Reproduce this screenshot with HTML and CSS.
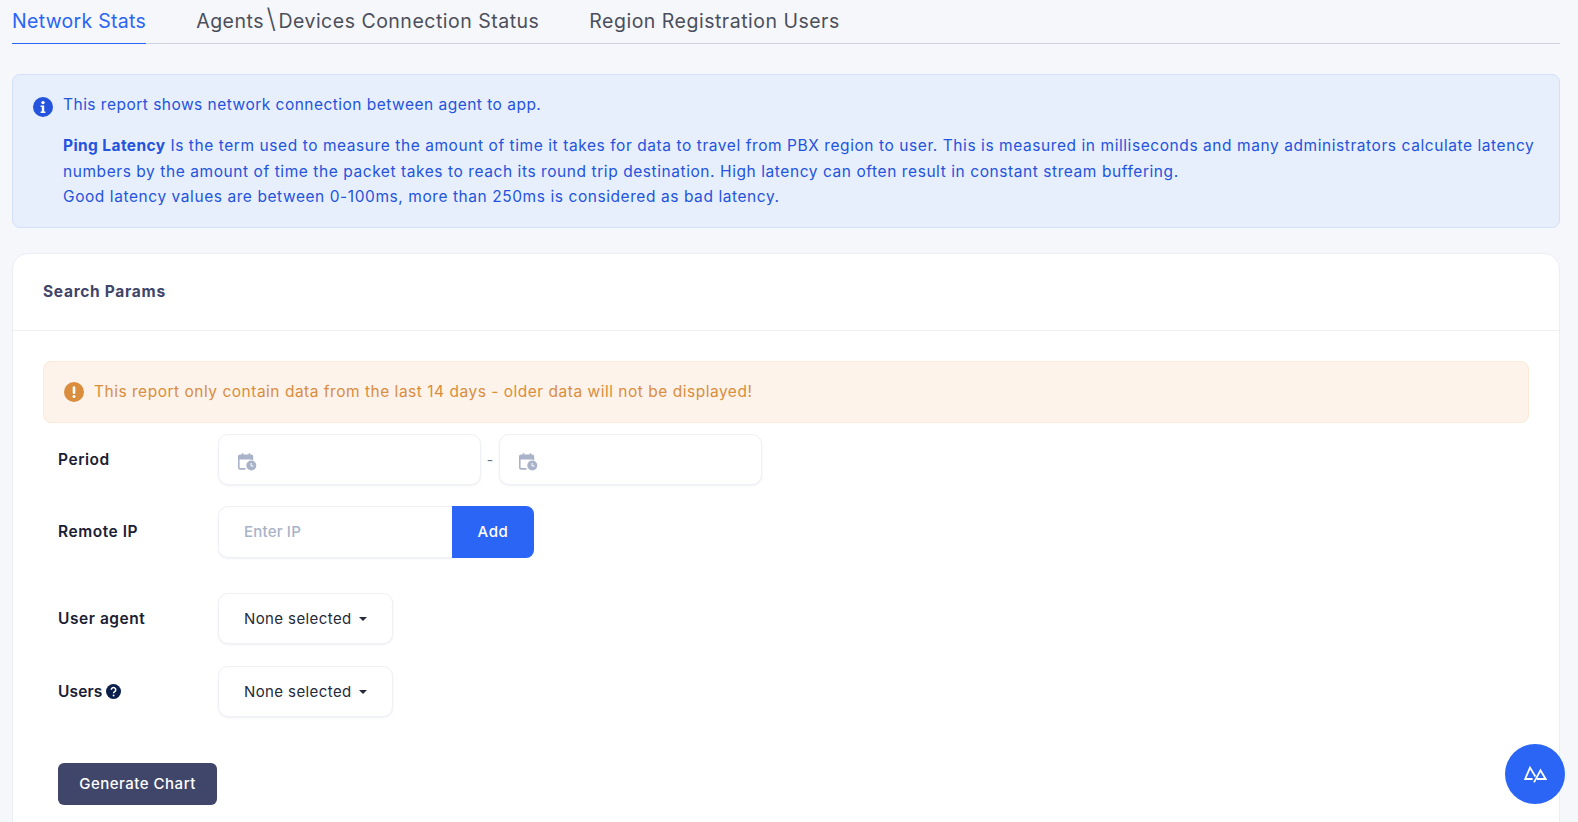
FILE: index.html
```html
<!DOCTYPE html>
<html lang="en">
<head>
<meta charset="utf-8">
<title>Network Stats</title>
<link rel="stylesheet" href="styles.css">
</head>
<body>
<main class="page">
  <nav class="tabs">
    <a class="tab active">Network Stats</a>
    <a class="tab">Agents<span class="slash">\</span>Devices Connection Status</a>
    <a class="tab">Region Registration Users</a>
  </nav>

  <section class="info">
    <svg class="info-icon" viewBox="0 0 20 20"><circle cx="10" cy="10" r="10" fill="#2453dd"/><circle cx="10" cy="5.6" r="1.7" fill="#fff"/><path d="M7.6 8.4h3.6v6h1.2v1.6H7.6v-1.6h1.2V10H7.6z" fill="#fff"/></svg>
    <div class="info-body">
      <p class="info-lead">This report shows network connection between agent to app.</p>
      <p class="info-text"><strong>Ping Latency</strong> Is the term used to measure the amount of time it takes for data to travel from PBX region to user. This is measured in milliseconds and many administrators calculate latency numbers by the amount of time the packet takes to reach its round trip destination. High latency can often result in constant stream buffering.<br>Good latency values are between 0-100ms, more than 250ms is considered as bad latency.</p>
    </div>
  </section>

  <section class="card">
    <header class="card-head">Search Params</header>
    <div class="card-body">
      <div class="warn">
        <svg class="warn-icon" viewBox="0 0 20 20"><circle cx="10" cy="10" r="10" fill="#d98d3d"/><rect x="8.7" y="4.2" width="2.6" height="7.8" rx="1.2" fill="#fff"/><circle cx="10" cy="14.6" r="1.5" fill="#fff"/></svg>
        <span class="warn-text">This report only contain data from the last 14 days - older data will not be displayed!</span>
      </div>

      <div class="row row-period">
        <label class="label">Period</label>
        <div class="field date">
          <svg class="cal" viewBox="0 0 20 18"><path d="M3 1.5h1.8v-1.3h1.6v1.3h5.2v-1.3h1.6v1.3h1a2 2 0 0 1 2 2V7h-1.6V6.4H2.6v8c0 .3.2.5.5.5H8.5v1.8H3a2.2 2.2 0 0 1-2-2V3.5a2 2 0 0 1 2-2z" fill="#a8b2c8"/><circle cx="14.3" cy="12.5" r="5" fill="#a8b2c8"/><path d="M14.1 10v3h2.4" stroke="#fff" fill="none"/></svg>
        </div>
        <span class="dash">-</span>
        <div class="field date">
          <svg class="cal" viewBox="0 0 20 18"><path d="M3 1.5h1.8v-1.3h1.6v1.3h5.2v-1.3h1.6v1.3h1a2 2 0 0 1 2 2V7h-1.6V6.4H2.6v8c0 .3.2.5.5.5H8.5v1.8H3a2.2 2.2 0 0 1-2-2V3.5a2 2 0 0 1 2-2z" fill="#a8b2c8"/><circle cx="14.3" cy="12.5" r="5" fill="#a8b2c8"/><path d="M14.1 10v3h2.4" stroke="#fff" fill="none"/></svg>
        </div>
      </div>

      <div class="row row-ip">
        <label class="label">Remote IP</label>
        <div class="group">
          <div class="field ip">Enter IP</div>
          <button class="add">Add</button>
        </div>
      </div>

      <div class="row row-agent">
        <label class="label">User agent</label>
        <div class="field select">None selected<i class="caret"></i></div>
      </div>

      <div class="row row-users">
        <label class="label"><span class="label-tight">Users</span>
          <svg class="help" viewBox="0 0 14 14"><circle cx="7" cy="7" r="7" fill="#0b1f4d"/><path d="M4.9 5.4a2.1 2.1 0 1 1 3.2 1.8c-.7.4-1 .7-1 1.4" stroke="#fff" stroke-width="1.4" fill="none"/><circle cx="7.1" cy="10.7" r=".9" fill="#fff"/></svg>
        </label>
        <div class="field select">None selected<i class="caret"></i></div>
      </div>

      <button class="generate">Generate Chart</button>
    </div>
  </section>
</main>
<button class="fab" aria-label="Help">
  <svg viewBox="0 0 24 18" width="24" height="18"><path d="M9.6 14H2.2L7 2.6 12.4 11.5M14 14H22.6L17.5 5.4 11 17.4" stroke="#fff" stroke-width="1.8" fill="none"/></svg>
</button>
</body>
</html>
```
FILE: styles.css
```css
* { box-sizing: border-box; }
html, body { margin: 0; height: 822px; overflow: hidden; }
body {
  background: #f5f7fb;
  font-family: Inter, "Noto Sans", sans-serif;
  color: #1a2033;
  position: relative;
}
.page { padding: 0 18px 0 12px; height: 822px; overflow: hidden; }

.tabs {
  display: flex;
  gap: 50px;
  height: 44px;
  border-bottom: 1px solid #cdd2df;
}
.tab {
  font-size: 19.5px;
  letter-spacing: .5px;
  line-height: 43px;
  height: 44px;
  color: #4b4f5c;
  white-space: nowrap;
}
.tab.active { color: #2a65f5; border-bottom: 1px solid #2a65f5; letter-spacing: .3px; }
.slash { font-size: 27px; font-weight: 300; line-height: 20px; margin: 0 2.5px; letter-spacing: 0; }

.info {
  margin-top: 30px;
  height: 154px;
  display: flex;
  gap: 10px;
  padding: 19px 20px 0 20px;
  background: #e7effc;
  border: 1px solid #d3e0fa;
  border-radius: 8px;
  color: #2453dd;
  font-size: 15.5px;
}
.info-icon { width: 20px; height: 20px; flex: none; margin-top: 3px; }
.info-body { flex: 1; }
.info p { margin: 0; }
.info-lead { line-height: 21px; margin-bottom: 18px !important; letter-spacing: .48px; }
.info-text { line-height: 25.5px; letter-spacing: .57px; }
.info strong { font-weight: 700; letter-spacing: .4px; }

.card {
  margin-top: 25px;
  height: 640px;
  background: #fff;
  border: 1px solid #eceef5;
  border-radius: 16px;
}
.card-head {
  height: 77px;
  padding-left: 30px;
  line-height: 75px;
  font-size: 15.5px;
  font-weight: 700;
  letter-spacing: .7px;
  color: #3f4669;
  border-bottom: 1px solid #eef0f5;
}
.card-body { padding: 30px 30px 0; }

.warn {
  height: 62px;
  display: flex;
  align-items: center;
  gap: 10px;
  padding-left: 20px;
  background: #fdf3ea;
  border: 1px solid #fbe9d7;
  border-radius: 8px;
  color: #d98d3d;
  font-size: 15.5px;
  letter-spacing: .51px;
}
.warn-icon { width: 20px; height: 20px; flex: none; }
.warn-text { padding-bottom: 2px; }

.row { display: flex; align-items: center; padding-left: 15px; }
.label {
  width: 160px;
  flex: none;
  font-size: 15.5px;
  font-weight: 600;
  letter-spacing: .55px;
  color: #1a2033;
  display: flex;
  align-items: center;
  gap: 3px;
}
.label-tight { letter-spacing: .15px; }
.field {
  height: 51px;
  background: #fff;
  border: 1px solid #eff1f7;
  border-radius: 10px;
  box-shadow: 0 1px 2px rgba(40, 50, 90, .08);
  font-size: 15px;
  letter-spacing: .4px;
  display: flex;
  align-items: center;
  padding-left: 25px;
}
.row-period { margin-top: 11px; }
.date { width: 263px; padding-left: 18px; }
.cal { width: 20px; height: 18px; margin-top: 4px; }
.dash { width: 18px; text-align: center; color: #6b7285; font-size: 14px; }
.row-ip { margin-top: 21px; }
.row-ip .label { padding-bottom: 2px; }
.group { display: flex; }
.ip {
  width: 234px;
  height: 52px;
  border-radius: 10px 0 0 10px;
  border-right: 0;
  color: #a8b2c8;
  font-weight: 500;
  letter-spacing: .2px;
  padding-bottom: 2px;
}
.add {
  width: 82px;
  height: 52px;
  border: 0;
  padding: 0 0 2px;
  background: #2a65f5;
  color: #fff;
  border-radius: 0 8px 8px 0;
  font: 500 15px Inter, sans-serif;
  letter-spacing: .6px;
}
.row-agent { margin-top: 35px; }
.row-users { margin-top: 22px; }
.select { width: 175px; color: #252a3a; }
.caret {
  margin-left: 7px;
  border-top: 4px solid #252a3a;
  border-left: 4px solid transparent;
  border-right: 4px solid transparent;
}
.help { width: 15px; height: 15px; }
.generate {
  display: block;
  margin: 46px 0 0 15px;
  width: 159px;
  height: 42px;
  border: 0;
  padding: 0 0 2px;
  border-radius: 6px;
  background: #3f4669;
  color: #fff;
  font: 500 15px Inter, sans-serif;
  letter-spacing: .5px;
}
.fab {
  position: absolute;
  left: 1505px;
  top: 744px;
  width: 60px;
  height: 60px;
  border: 0;
  padding: 0;
  border-radius: 50%;
  background: #2a65f5;
  display: flex;
  align-items: center;
  justify-content: center;
}
```
